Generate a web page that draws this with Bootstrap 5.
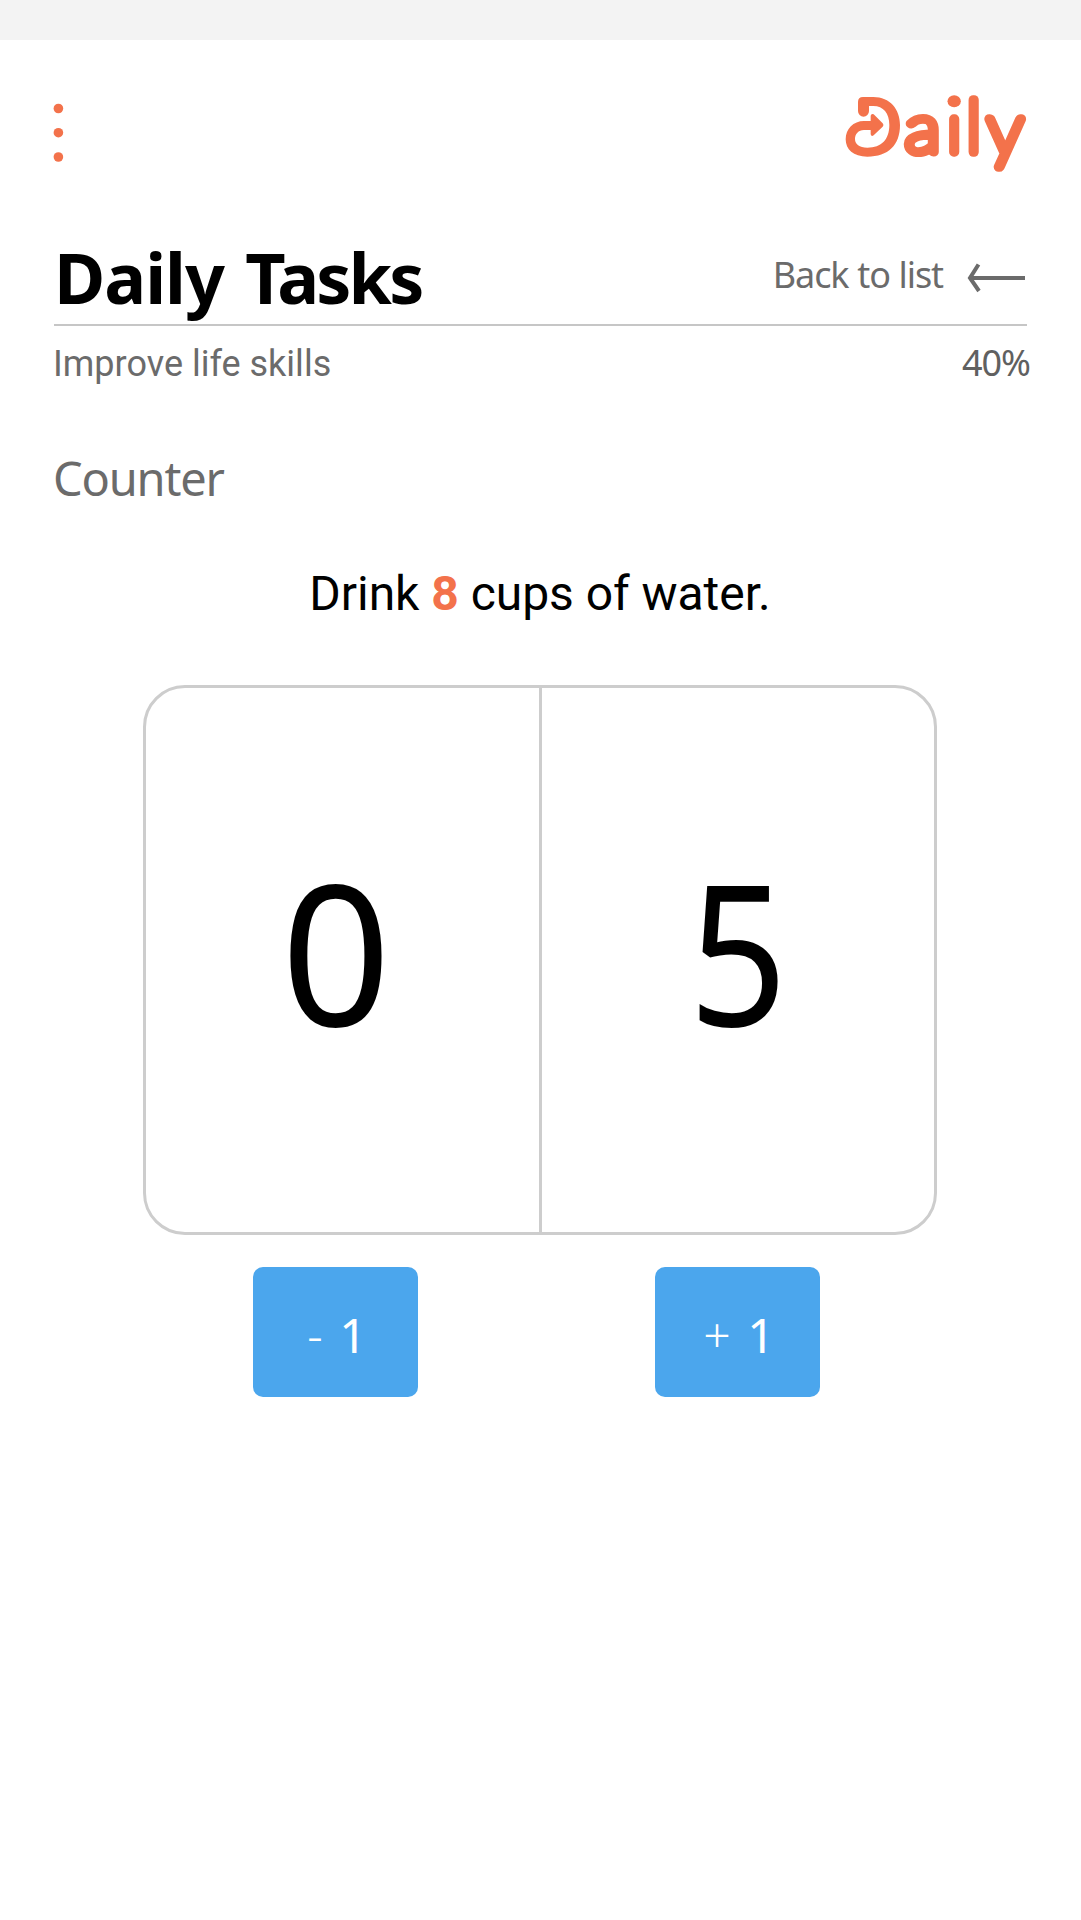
<!DOCTYPE html>
<html lang="en">
<head>
<meta charset="utf-8">
<meta name="viewport" content="width=device-width, initial-scale=1">
<title>Daily Tasks</title>
<link href="https://cdn.jsdelivr.net/npm/bootstrap@5.3.0/dist/css/bootstrap.min.css" rel="stylesheet">
<style>
body{font-family:"Noto Sans","Open Sans",sans-serif;color:#000;background:#fff;min-height:1920px;overflow-x:hidden}
.status-strip{height:40px;background:#f3f3f3}
.page-pad{padding:0 54px}
.top-nav{height:190px;padding-top:40px}
.menu-btn{width:9px;height:104px}
.brand-logo{width:220px;height:110px;margin-right:-23px}
.title-row{border-bottom:2px solid #c6c6c6;height:96px}
.page-title{font-size:70px;line-height:95px;font-weight:700;letter-spacing:-1px;word-spacing:4px}
.page-title span{letter-spacing:-2.8px}
.back-link{font-size:36px;line-height:89px;color:#6b6b6b;letter-spacing:-1.1px;word-spacing:.5px}
.back-link svg{width:58px;height:30px;margin:7px 2px 0 24px}
.sub-row{height:75px}
.goal-name{font:400 36px/77px Roboto,sans-serif;color:#6b6b6b;margin-left:-1px}
.goal-rate{font-size:36px;line-height:73px;color:#606060;letter-spacing:-1px;margin-right:-3px}
.task-type{font-size:47px;line-height:70px;margin:42px 0 0 -1px;color:#6b6b6b;letter-spacing:-1.2px}
.task-text{font:400 48px/80px Roboto,sans-serif;margin:41px 1px 0 0;letter-spacing:-.04px}
.task-text b{color:#f3724b;font-weight:700}
.counter-board{width:794px;height:550px;margin:51px 0 0 89px;border:3px solid #cdcdcd;border-radius:42px}
.digit{font-size:196px;line-height:524px}
.digit span{display:inline-block;transform:scaleX(.98)}
.digit-tens{border-right:3px solid #cdcdcd;padding-right:13px;flex:0 0 396px}
.digit-ones span{transform:scaleX(.88)}
.step-row{margin:32px 0 0 199px;gap:237px}
.step-btn{width:165px;height:130px;border:0;border-radius:10px;background:#4ba6ed;color:#fff;font-size:48px;font-weight:400;padding:6px 0 0 3px;word-spacing:4px}
.step-btn span{font-weight:300}
</style>
</head>
<body>
<div class="status-strip"></div>
<main class="page-pad">
  <nav class="top-nav d-flex justify-content-between align-items-start">
    <a href="#" class="menu-btn" aria-label="Menu"><svg class="d-block" width="9" height="104" viewBox="0 0 9 104" fill="#f3724b" overflow="visible"><circle cx="4.4" cy="28.5" r="4.8"/><circle cx="4.4" cy="52.7" r="4.8"/><circle cx="4.4" cy="77" r="4.8"/></svg></a>
    <a href="#" class="brand-logo" aria-label="Daily"><svg class="d-block" width="220" height="110" viewBox="0 0 660 330" fill="#f3724b">
      <clipPath id="stemClip"><path d="M340 100H405V240H340Z"/></clipPath>
      <path d="M84 66Q84 51 99 51H130C180 51 210 88 210 135C210 195 175 230 112 230C70 230 47 208 47 178C47 147 70 123 102 123H122V107Q124 99 131 103L158 130Q163 135 158 140L131 166Q124 171 122 163V150H102C85 150 75 162 75 177C75 193 88 203 112 203C155 203 178 178 178 135C178 100 160 78 130 78H117V93A16.5 17 0 0 1 84 93Z"/>
      <g text-anchor="middle" font-family="Lato, sans-serif" font-weight="100" font-size="207" stroke="#f3724b" stroke-width="28" stroke-linejoin="round">
        <text transform="translate(278 217) scale(1.08 .98)">a</text>
        <text x="372.5" y="217" clip-path="url(#stemClip)">i</text>
        <text transform="translate(431 217) scale(1 1.035)">l</text>
        <text transform="translate(525.500 222) scale(1.06 1.04)">y</text>
      </g>
      <ellipse cx="372.500" cy="63.500" rx="20" ry="18"/>
    </svg></a>
  </nav>
  <header class="title-row d-flex justify-content-between align-items-start">
    <h1 class="page-title m-0">Daily <span>Tasks</span></h1>
    <a href="#" class="back-link d-flex align-items-center text-decoration-none"><span class="back-label">Back to list</span><svg viewBox="0 0 58 30" fill="none" stroke="#6b6b6b" stroke-width="4"><path d="M58 15H3M11.500 1.500L3 15L12 28"/></svg></a>
  </header>
  <div class="sub-row d-flex justify-content-between">
    <span class="goal-name">Improve life skills</span>
    <span class="goal-rate">40%</span>
  </div>
  <h2 class="task-type fw-normal mb-0">Counter</h2>
  <p class="task-text text-center mb-0">Drink <b>8</b> cups of water.</p>
  <section class="counter-board d-flex text-center">
    <div class="digit digit-tens"><span>0</span></div>
    <div class="digit digit-ones flex-fill"><span>5</span></div>
  </section>
  <div class="step-row d-flex">
    <button type="button" class="step-btn btn"><span>-</span> 1</button>
    <button type="button" class="step-btn btn"><span>+</span> 1</button>
  </div>
</main>
<script src="https://cdn.jsdelivr.net/npm/bootstrap@5.3.0/dist/js/bootstrap.bundle.min.js"></script>
</body>
</html>
